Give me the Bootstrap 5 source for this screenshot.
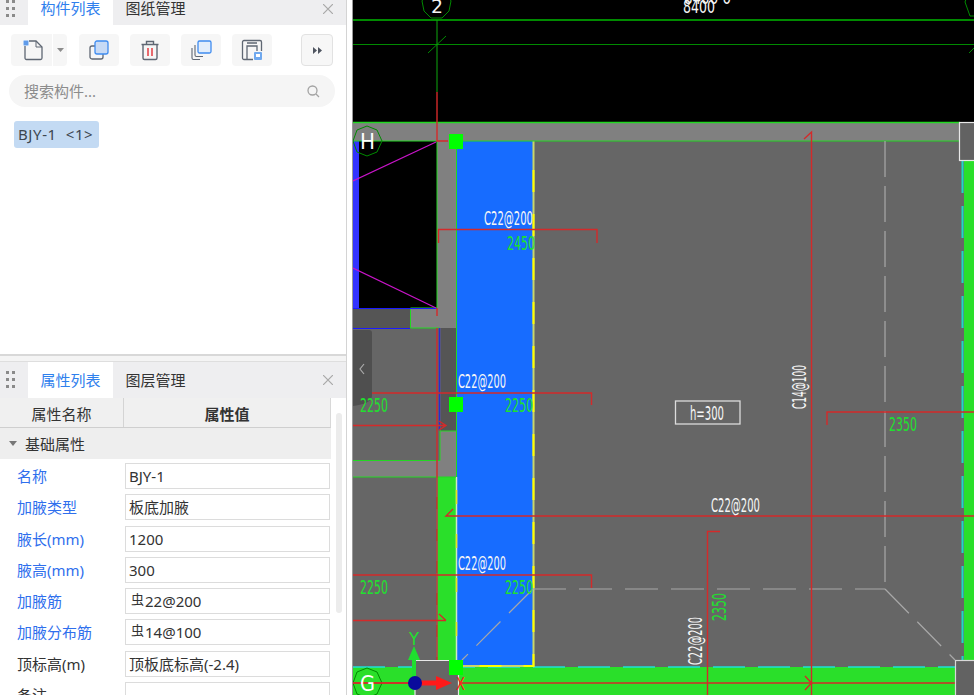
<!DOCTYPE html>
<html lang="zh">
<head>
<meta charset="UTF-8">
<meta name="viewport" content="width=device-width, initial-scale=1.0">
<title>构件列表</title>
<link rel="stylesheet" href="https://cdn.jsdelivr.net/npm/bootstrap@5.3.0/dist/css/bootstrap.min.css">
<style>
  html, body { height: 695px; overflow: hidden; }
  body { font-family: "Noto Sans", "Noto Sans CJK SC", sans-serif; font-size: 15px; color: #333; background: #fff; }
  .side { width: 347px; height: 695px; flex: none; border-right: 1px solid #d4d4d4; }
  .gap-strip { width: 6px; flex: none; background: #fff; border-right: 1px solid #999; }
  .drawing { flex: 1 1 auto; min-width: 0; background: #000; }
  .drawing svg { display: block; }

  .panel-top { height: 356px; border-bottom: 2px solid #d8d8d8; flex: none; }
  .panel-sep { height: 5px; background: #f4f4f4; flex: none; }
  .panel-low { flex: 1 1 auto; min-height: 0; overflow: hidden; border-top: 1px solid #dedede; }

  .tab-head { background: #eeeef0; }
  .tab-head.h-top { height: 25px; }
  .tab-head.h-low { height: 37px; }
  .grip { width: 28px; flex: none; }
  .tab-one { width: 85px; flex: none; text-align: center; line-height: 1; color: #333; }
  .tab-one.on { background: #fff; color: #2f80ed; }
  .tab-x { width: 10px; height: 10px; margin-right: 13px; }

  .tool-row { padding: 9px 13px 0 11px; height: 41px; }
  .tool-btn { width: 40px; height: 32px; background: #f6f6f6; border-radius: 4px; margin-right: 11px; }
  .tool-btn.b-new { width: 41px; margin-right: 0; border-radius: 4px 0 0 4px; }
  .tool-btn.b-drop { width: 15px; margin-right: 12px; border-left: 1px solid #fff; border-radius: 0 4px 4px 0; }
  .tool-btn.b-more { width: 32px; margin: 0 0 0 auto; border: 1px solid #e2e2e2; background: #f7f7f7; }

  .find-box { margin: 9px 11px 0 9px; height: 32px; border-radius: 16px; background: #f5f5f5; padding: 0 15px; color: #8c8c8c; }
  .comp-chip { margin: 14px 0 0 14px; width: 85px; height: 27px; line-height: 27px; background: #c3daf3; border-radius: 3px; padding-left: 4px; color: #3c4650; white-space: pre; letter-spacing: .6px; }

  .prop-wrap { width: 331px; flex: none; }
  .prop-head { height: 30px; background: #f0f0f0; border-bottom: 1px solid #cfcfcf; border-right: 1px solid #d8d8d8; }
  .prop-head > div { line-height: 32px; text-align: center; }
  .prop-c1 { width: 124px; flex: none; border-right: 1px solid #d4d4d4; }
  .prop-c2 { flex: 1 1 auto; font-weight: 700; }
  .prop-group { height: 31px; background: #eeeeee; line-height: 33px; padding-left: 25px; position: relative; }
  .prop-group::before { content: ""; position: absolute; left: 9px; top: 13px; border: 4px solid transparent; border-top: 5px solid #777; border-bottom: 0; }
  .prop-list { padding-top: 4px; }
  .prop-row { height: 31.3px; }
  .prop-name { width: 125px; flex: none; padding-left: 17px; color: #2f6fed; line-height: 26px; white-space: nowrap; }
  .prop-name.plain { color: #333; }
  .prop-val { flex: 1 1 auto; height: 26px; line-height: 24px; margin-right: 1px; border: 1px solid #dcdcdc; background: #fff; padding-left: 3px; }
  .bar-sym { font-size: 13px; position: relative; top: -3px; margin-right: 1px; margin-left: 2px; }
  .scroll-track { width: 6px; height: 200px; margin: 15px 0 0 5px; background: #ececec; border-radius: 3px; }

  .cad-w { font-family: "DejaVu Sans", sans-serif; fill: #f6f6f6; }
  .cad-g { font-family: "DejaVu Sans", sans-serif; fill: #1fe02f; }
</style>
</head>
<body>
<div class="d-flex">
  <aside class="side d-flex flex-column">
    <section class="panel-top d-flex flex-column">
      <div class="tab-head h-top d-flex align-items-center">
        <div class="grip">
          <svg width="28" height="25"><g fill="#8a8a8a"><rect x="6" y="0" width="3" height="3"/><rect x="12" y="0" width="3" height="3"/><rect x="6" y="7" width="3" height="3"/><rect x="12" y="7" width="3" height="3"/><rect x="6" y="14" width="3" height="3"/><rect x="12" y="14" width="3" height="3"/></g></svg>
        </div>
        <div class="tab-one on align-self-stretch d-flex align-items-center justify-content-center pb-2">构件列表</div>
        <div class="tab-one align-self-stretch d-flex align-items-center justify-content-center pb-2">图纸管理</div>
        <svg class="tab-x ms-auto mb-2" viewBox="0 0 10 10"><path d="M0 0L10 10M10 0L0 10" stroke="#a8a8a8" stroke-width="1.2"/></svg>
      </div>
      <div class="tool-row d-flex">
        <div class="tool-btn b-new d-flex align-items-center justify-content-center">
          <svg width="24" height="24" viewBox="0 0 24 24"><path d="M5 3H16L22 9V20a1.500 1.500 0 0 1-1.500 1.500H6.500A1.500 1.500 0 0 1 5 20Z" fill="none" stroke="#5f6773" stroke-width="1.300"/><path d="M16 3V9H22" fill="none" stroke="#5f6773" stroke-width="1"/><rect x="3" y="2" width="6" height="6" fill="#fff"/><rect x="3.500" y="2.500" width="5" height="5" fill="#5f9bea"/></svg>
        </div>
        <div class="tool-btn b-drop d-flex align-items-center justify-content-center">
          <svg width="7" height="4"><path d="M0 0H7L3.500 4Z" fill="#8c8c8c"/></svg>
        </div>
        <div class="tool-btn d-flex align-items-center justify-content-center">
          <svg width="22" height="22" viewBox="0 0 22 22"><rect x="2" y="7" width="13" height="13" rx="2" fill="none" stroke="#5f6773" stroke-width="1.300"/><rect x="7" y="2" width="13" height="13" rx="2" fill="#c7daf5" stroke="#3f8cf0" stroke-width="1.300"/></svg>
        </div>
        <div class="tool-btn d-flex align-items-center justify-content-center">
          <svg width="20" height="22" viewBox="0 0 20 22"><path d="M3 6V19a1.500 1.500 0 0 0 1.500 1.500h11A1.500 1.500 0 0 0 17 19V6" fill="none" stroke="#5f6773" stroke-width="1.400"/><path d="M1.500 5.500H18.500M6.500 5V2.500H13.500V5" fill="none" stroke="#5f6773" stroke-width="1.400"/><path d="M8 9V17M12 9V17" stroke="#e5484d" stroke-width="1.600"/></svg>
        </div>
        <div class="tool-btn d-flex align-items-center justify-content-center">
          <svg width="22" height="22" viewBox="0 0 22 22"><path d="M2 9V19a1.500 1.500 0 0 0 1.500 1.500H10" fill="none" stroke="#5f6773" stroke-width="1.100"/><path d="M5 6V16a1.500 1.500 0 0 0 1.500 1.500H13" fill="none" stroke="#5f6773" stroke-width="1.100"/><rect x="8" y="2" width="13" height="12" rx="1.500" fill="#e3eefb" stroke="#3f8cf0" stroke-width="1.300"/></svg>
        </div>
        <div class="tool-btn d-flex align-items-center justify-content-center">
          <svg width="22" height="22" viewBox="0 0 22 22"><path d="M12 20.500H3a1.500 1.500 0 0 1-1.500-1.500V3A1.500 1.500 0 0 1 3 1.500H19A1.500 1.500 0 0 1 20.500 3V12" fill="none" stroke="#5f6773" stroke-width="1.300"/><path d="M6 20V7H16V12M6 4H16" fill="none" stroke="#5f6773" stroke-width="1.300"/><rect x="13" y="13" width="8" height="8" rx="1" fill="#6fa8ee"/><rect x="15" y="15" width="4" height="3" fill="#fff"/></svg>
        </div>
        <div class="tool-btn b-more d-flex align-items-center justify-content-center">
          <svg width="9" height="7"><path d="M0 0L4 3.500L0 7ZM5 0L9 3.500L5 7Z" fill="#4f5560"/></svg>
        </div>
      </div>
      <div class="find-box d-flex align-items-center justify-content-between">
        <span>搜索构件...</span>
        <svg width="13" height="13" viewBox="0 0 13 13"><circle cx="5.500" cy="5.500" r="4.500" fill="none" stroke="#a3a3a3" stroke-width="1.300"/><path d="M9 9L12 12" stroke="#a3a3a3" stroke-width="1.300"/></svg>
      </div>
      <div class="comp-chip">BJY-1  &lt;1&gt;</div>
    </section>
    <div class="panel-sep"></div>
    <section class="panel-low d-flex flex-column">
      <div class="tab-head h-low d-flex align-items-center flex-none">
        <div class="grip">
          <svg width="28" height="36"><g fill="#8a8a8a"><rect x="6" y="9" width="3" height="3"/><rect x="12" y="9" width="3" height="3"/><rect x="6" y="16" width="3" height="3"/><rect x="12" y="16" width="3" height="3"/><rect x="6" y="23" width="3" height="3"/><rect x="12" y="23" width="3" height="3"/></g></svg>
        </div>
        <div class="tab-one on align-self-stretch d-flex align-items-center justify-content-center">属性列表</div>
        <div class="tab-one align-self-stretch d-flex align-items-center justify-content-center">图层管理</div>
        <svg class="tab-x ms-auto" viewBox="0 0 10 10"><path d="M0 0L10 10M10 0L0 10" stroke="#a8a8a8" stroke-width="1.2"/></svg>
      </div>
      <div class="d-flex">
        <div class="prop-wrap">
          <div class="prop-head d-flex">
            <div class="prop-c1">属性名称</div>
            <div class="prop-c2">属性值</div>
          </div>
          <div class="prop-group">基础属性</div>
          <div class="prop-list" id="propList"></div>
        </div>
        <div class="scroll-track"></div>
      </div>
    </section>
  </aside>
  <div class="gap-strip"></div>
  <main class="drawing">
    <svg width="621" height="695" viewBox="353 0 621 695" id="cad">
      <!-- floors -->
      <rect x="353" y="122" width="621" height="573" fill="#666"/>
      <rect x="353" y="0" width="621" height="122" fill="#000"/>
      <rect x="353" y="122" width="607" height="19" fill="#808080"/>
      <rect x="353" y="141" width="84" height="167" fill="#000"/>
      <rect x="353" y="141" width="6" height="167" fill="#3333ff"/>
      <rect x="353" y="309" width="57" height="19" fill="#555"/>
      <rect x="410" y="309" width="46" height="19" fill="#808080"/>
      <rect x="437" y="141" width="20" height="168" fill="#808080"/>
      <rect x="441" y="328" width="15" height="103" fill="#555"/>
      <rect x="440" y="431" width="16" height="46" fill="#808080"/>
      <rect x="353" y="461" width="103" height="16" fill="#808080"/>
      <!-- green concrete -->
      <rect x="437" y="477" width="19" height="190" fill="#2adf2a"/>
      <rect x="964" y="161" width="10" height="506" fill="#2adf2a"/>
      <rect x="353" y="667" width="621" height="28" fill="#2adf2a"/>
      <path d="M962.500 161V667" stroke="#1fd8c8" stroke-width="2" stroke-dasharray="32 13"/>
      <path d="M353 667H960" stroke="#1fe0d8" stroke-width="1.500" stroke-dasharray="32 13"/>
      <path d="M437 477V667" stroke="#1fe0d8" stroke-width="1" stroke-dasharray="20 12"/>
      <!-- blue haunch -->
      <rect x="457" y="141" width="76" height="525" fill="#176cff"/>
      <path d="M533.500 141V666H457" fill="none" stroke="#c9d66a" stroke-width="2"/>
      <path d="M533.500 170V666H457" fill="none" stroke="#ffff00" stroke-width="2" stroke-dasharray="22 22"/>
      <path d="M456.500 477V666" fill="none" stroke="#cfe8c0" stroke-width="1.500"/>
      <path d="M456.500 490V660" fill="none" stroke="#e6e620" stroke-width="1.500" stroke-dasharray="14 30"/>
      <!-- green outlines -->
      <g fill="none" stroke="#22d822">
        <path d="M353 122.500H960" stroke-width="1.500"/>
        <path d="M353 141H437M457 141H960" stroke-width="1"/>
        <path d="M437 141V308H410.500V328H439.500V345" stroke-width="1"/>
        <path d="M456.500 141V477" stroke-width="1"/>
        <path d="M440 460.500V431H456M353 460.500H440M353 477H456" stroke-width="1"/>
      </g>
      <path d="M353 308.500H437M353 328.500H410" stroke="#1a1aff" stroke-width="1"/>
      <path d="M439.500 328V430" stroke="#2a2acc" stroke-width="1.500"/>
      <path d="M353 181L436 142M353 268L436 308" stroke="#c814c8" stroke-width="1.200"/>
      <!-- grid lines -->
      <g fill="none" stroke="#008a00">
        <path d="M353 20H974" stroke-width="1.800"/>
        <path d="M353 44.500H974" stroke-width="1"/>
        <path d="M428 53L446 36M969 53L974 48" stroke-width="1"/>
        <path d="M437 20V92" stroke="#0ea80e" stroke-width="1"/>
        <polygon points="427,-9 446,-9 451,1 449,11 442,18 431,18 424,11 422,1"/>
        <polygon points="367,126 377,130 382,141 377,152 367,156 357,152 353,141 357,130"/>
        <polygon points="367,668 377,672 382,683 377,694 367,698 357,694 353,683 357,672"/>
        <polygon points="970,-12 982,-12 982,16 970,16 965,2"/>
      </g>
      <!-- dashed slab edges -->
      <g fill="none" stroke="#a8a8a8" stroke-width="1.200">
        <path d="M885 141V589" stroke-dasharray="36 9"/>
        <path d="M533 589H885" stroke-dasharray="33 13"/>
        <path d="M885 589L955 660" stroke-dasharray="34 12"/>
        <path d="M533 589L462 660" stroke-dasharray="34 12"/>
      </g>
      <!-- rebar lines -->
      <g fill="none" stroke="#d42a2a" stroke-width="1.400">
        <path d="M437 92V141H448"/>
        <path d="M438.500 243V229.500H597V243"/>
        <path d="M437 308V316M437 328V695"/>
        <path d="M372 393H591.500V405"/>
        <path d="M353 425.500H446M439 421L446 425.500L439 430"/>
        <path d="M974 516H446M453 509L446 516H454"/>
        <path d="M353 575H591.500V588"/>
        <path d="M353 620.500H446M439 614L446 620.500"/>
        <path d="M353 683H974"/>
        <path d="M811.500 695V132L804 139"/>
        <path d="M805 676L811.500 683L805 690"/>
        <path d="M827 425V412H974"/>
        <path d="M720 531.500H707.500V695"/>
      </g>
      <!-- corner boxes -->
      <rect x="959.500" y="122.500" width="16" height="38" fill="#626262" stroke="#e8e8e8" stroke-width="1.200"/>
      <rect x="955.500" y="660.500" width="20" height="36" fill="#626262" stroke="#d8d8d8" stroke-width="1.200"/>
      <path d="M415 696V660.500H458.500V696" fill="#666" stroke="#e8e8e8" stroke-width="1.200"/>
      <path d="M353 683H415" stroke="#d42a2a" stroke-width="1.400"/>
      <!-- handles -->
      <rect x="449" y="134" width="14" height="15" fill="#00ff00"/>
      <rect x="449" y="397" width="14" height="15" fill="#00ff00"/>
      <rect x="449" y="660" width="14" height="15" fill="#00ff00"/>
      <!-- collapse tab -->
      <path d="M353 330H369a3 3 0 0 1 3 3V396C372 402 362 405 353 406Z" fill="#4f4f4f"/>
      <path d="M364 364L360 369L364 374" fill="none" stroke="#aaa" stroke-width="1.200"/>
      <!-- axis gizmo -->
      <path d="M414 677V660" stroke="#1fe02f" stroke-width="4"/>
      <path d="M408 660L414 646L420 660Z" fill="#1fe02f"/>
      <path d="M415 683H438" stroke="#ff1a1a" stroke-width="5"/>
      <path d="M436 676L452 683L436 690Z" fill="#ff1a1a"/>
      <circle cx="415" cy="683" r="7" fill="#0a0a9c"/>
      <text x="409" y="645" font-size="17" class="cad-g" textLength="10" lengthAdjust="spacingAndGlyphs">Y</text>
      <text x="456" y="690" font-size="17" fill="#ff2020" font-family="DejaVu Sans, sans-serif" textLength="9" lengthAdjust="spacingAndGlyphs">X</text>
      <!-- labels -->
      <text x="431" y="13" font-size="20" fill="#f4f4f4" font-family="DejaVu Sans, sans-serif" textLength="12" lengthAdjust="spacingAndGlyphs">2</text>
      <text x="360" y="149" font-size="22" fill="#fff" font-family="DejaVu Sans, sans-serif" textLength="15" lengthAdjust="spacingAndGlyphs">H</text>
      <text x="360" y="691" font-size="22" fill="#fff" font-family="DejaVu Sans, sans-serif" textLength="15" lengthAdjust="spacingAndGlyphs">G</text>
      <text x="683" y="13" font-size="18" class="cad-w" textLength="32" lengthAdjust="spacingAndGlyphs">8400</text>
      <text x="684" y="4" font-size="18" class="cad-w" textLength="47" lengthAdjust="spacingAndGlyphs">8400 0</text>
      <g font-size="20">
        <text x="484" y="225" class="cad-w" textLength="49" lengthAdjust="spacingAndGlyphs">C22@200</text>
        <text x="507" y="250" class="cad-g" textLength="28" lengthAdjust="spacingAndGlyphs">2450</text>
        <text x="458" y="388" class="cad-w" textLength="48" lengthAdjust="spacingAndGlyphs">C22@200</text>
        <text x="505" y="412" class="cad-g" textLength="28" lengthAdjust="spacingAndGlyphs">2250</text>
        <text x="360" y="412" class="cad-g" textLength="28" lengthAdjust="spacingAndGlyphs">2250</text>
        <text x="458" y="570" class="cad-w" textLength="48" lengthAdjust="spacingAndGlyphs">C22@200</text>
        <text x="505" y="594" class="cad-g" textLength="28" lengthAdjust="spacingAndGlyphs">2250</text>
        <text x="360" y="594" class="cad-g" textLength="28" lengthAdjust="spacingAndGlyphs">2250</text>
        <text x="889" y="431" class="cad-g" textLength="28" lengthAdjust="spacingAndGlyphs">2350</text>
        <text x="711" y="512" class="cad-w" textLength="49" lengthAdjust="spacingAndGlyphs">C22@200</text>
        <text transform="translate(806 409) rotate(-90)" class="cad-w" textLength="44" lengthAdjust="spacingAndGlyphs">C14@100</text>
        <text transform="translate(726 621) rotate(-90)" class="cad-g" textLength="28" lengthAdjust="spacingAndGlyphs">2350</text>
        <text transform="translate(702 665) rotate(-90)" class="cad-w" textLength="48" lengthAdjust="spacingAndGlyphs">C22@200</text>
        <text x="690" y="420" class="cad-w" textLength="34" lengthAdjust="spacingAndGlyphs">h=300</text>
      </g>
      <rect x="675.500" y="401" width="64.500" height="23" fill="none" stroke="#dcdcdc" stroke-width="1.300"/>
    </svg>
  </main>
</div>
<script src="https://cdn.jsdelivr.net/npm/bootstrap@5.3.0/dist/js/bootstrap.bundle.min.js"></script>
<script>
  const props = [
    ["名称", "BJY-1", true],
    ["加腋类型", "板底加腋", true],
    ["腋长(mm)", "1200", true],
    ["腋高(mm)", "300", true],
    ["加腋筋", "<span class='bar-sym'>虫</span>22@200", true],
    ["加腋分布筋", "<span class='bar-sym'>虫</span>14@100", true],
    ["顶标高(m)", "顶板底标高(-2.4)", false],
    ["备注", "", false],
  ];
  document.getElementById("propList").innerHTML = props.map((p) => `
    <div class="prop-row d-flex">
      <div class="prop-name ${p[2] ? "" : "plain"}">${p[0]}</div>
      <div class="prop-val">${p[1]}</div>
    </div>`).join("");
</script>
</body>
</html>
